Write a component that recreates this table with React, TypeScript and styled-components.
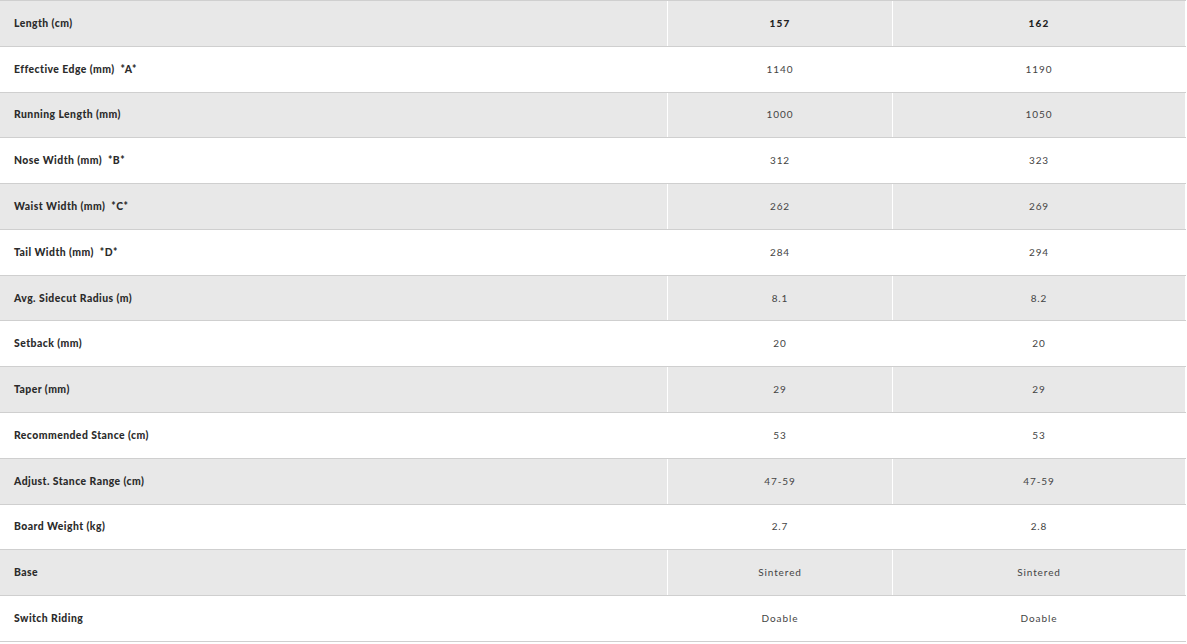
import styled, { createGlobalStyle } from "styled-components";

type Spec = {
  label: string;
  values: [string, string];
};

const specs: Spec[] = [
  { label: "Length (cm)", values: ["157", "162"] },
  { label: "Effective Edge (mm)  *A*", values: ["1140", "1190"] },
  { label: "Running Length (mm)", values: ["1000", "1050"] },
  { label: "Nose Width (mm)  *B*", values: ["312", "323"] },
  { label: "Waist Width (mm)  *C*", values: ["262", "269"] },
  { label: "Tail Width (mm)  *D*", values: ["284", "294"] },
  { label: "Avg. Sidecut Radius (m)", values: ["8.1", "8.2"] },
  { label: "Setback (mm)", values: ["20", "20"] },
  { label: "Taper (mm)", values: ["29", "29"] },
  { label: "Recommended Stance (cm)", values: ["53", "53"] },
  { label: "Adjust. Stance Range (cm)", values: ["47-59", "47-59"] },
  { label: "Board Weight (kg)", values: ["2.7", "2.8"] },
  { label: "Base", values: ["Sintered", "Sintered"] },
  { label: "Switch Riding", values: ["Doable", "Doable"] },
];

const App: React.FC = () => {
  return (
    <>
      <GlobalStyle />
      <Table>
        {specs.map((spec, i) => (
          <Row key={spec.label} $shaded={i % 2 === 0}>
            <Label>{spec.label}</Label>
            {spec.values.map((value, j) => (
              <Value key={j} $head={i === 0}>
                {value}
              </Value>
            ))}
          </Row>
        ))}
      </Table>
    </>
  );
};

const GlobalStyle = createGlobalStyle`
  body {
    margin: 0;
    background: #ffffff;
    font-family: Lato, "Open Sans", sans-serif;
    color: #2b2b2b;
  }
`;

const Table = styled.div`
  width: 1186px;
  border-top: 1px solid #cfcfcf;
`;

const Row = styled.div<{ $shaded: boolean }>`
  display: grid;
  grid-template-columns: 667px 224px 292px;
  column-gap: 1px;
  height: 45.79px;
  box-sizing: border-box;
  border-bottom: 1px solid #cfcfcf;
  background: #ffffff;

  > div {
    background: ${({ $shaded }) => ($shaded ? "#e8e8e8" : "#ffffff")};
  }
`;

const Label = styled.div`
  display: flex;
  align-items: center;
  padding: 0 0 1px 14px;
  font-size: 10.4px;
  font-weight: 900;
  letter-spacing: 0.45px;
  white-space: pre;
  color: #2b2b2b;
`;

const Value = styled.div<{ $head: boolean }>`
  display: flex;
  align-items: center;
  justify-content: center;
  padding-bottom: 1px;
  font-size: 10px;
  font-weight: ${({ $head }) => ($head ? 900 : 400)};
  letter-spacing: ${({ $head }) => ($head ? "1.2px" : "0.9px")};
  color: ${({ $head }) => ($head ? "#222222" : "#444444")};
`;

export default App;
